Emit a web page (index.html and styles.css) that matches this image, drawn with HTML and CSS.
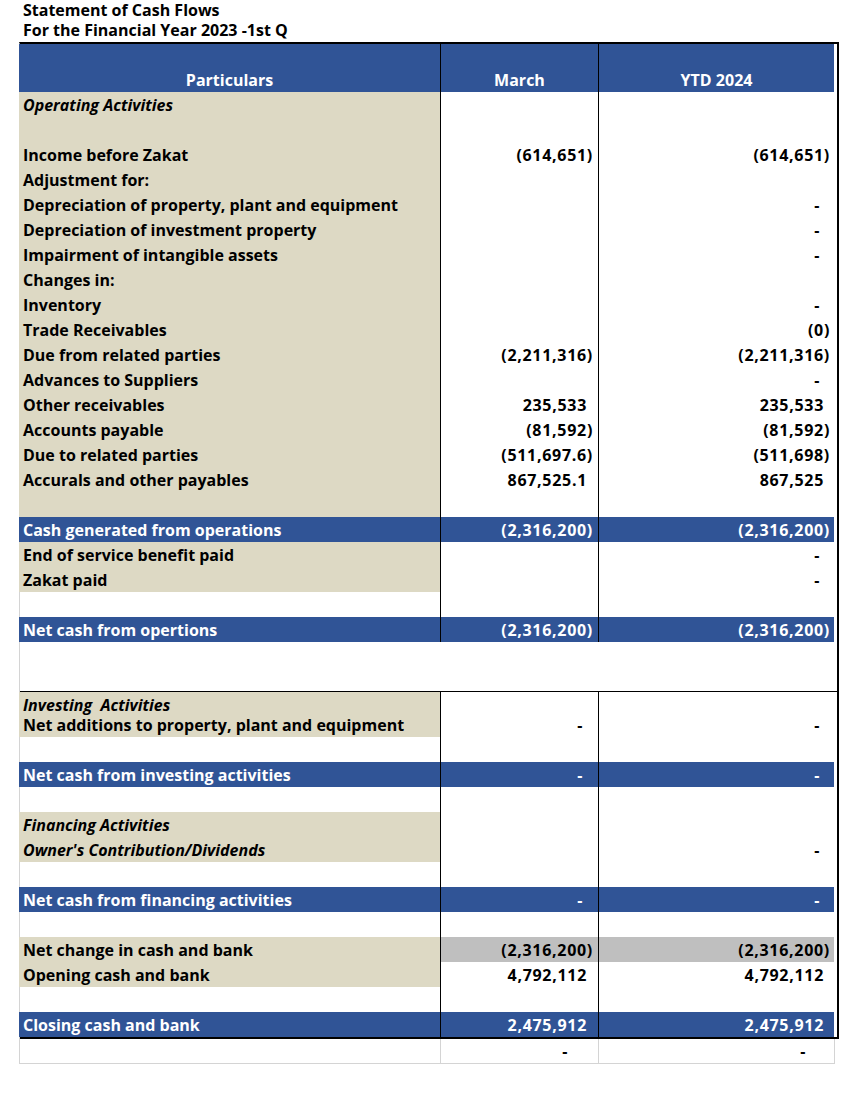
FILE: index.html
```html
<!DOCTYPE html>
<html>
<head>
<meta charset="utf-8">
<link rel="stylesheet" href="styles.css">
</head>
<body>
<div class="title">
  <div>Statement of Cash Flows</div>
  <div>For the Financial Year 2023 -1st Q</div>
</div>
<div class="sheet">
  <div class="r head blue">
    <div class="c1">Particulars</div>
    <div class="c2">March</div>
    <div class="c3">YTD 2024</div>
  </div>
  <div class="r"><div class="c1 tan it">Operating Activities</div><div class="c2"></div><div class="c3"></div></div>
  <div class="r"><div class="c1 tan"></div><div class="c2"></div><div class="c3"></div></div>
  <div class="r"><div class="c1 tan">Income before Zakat</div><div class="c2">(614,651)</div><div class="c3">(614,651)</div></div>
  <div class="r"><div class="c1 tan">Adjustment for:</div><div class="c2"></div><div class="c3"></div></div>
  <div class="r"><div class="c1 tan">Depreciation of property, plant and equipment</div><div class="c2"></div><div class="c3 dash">-</div></div>
  <div class="r"><div class="c1 tan">Depreciation of investment property</div><div class="c2"></div><div class="c3 dash">-</div></div>
  <div class="r"><div class="c1 tan">Impairment of intangible assets</div><div class="c2"></div><div class="c3 dash">-</div></div>
  <div class="r"><div class="c1 tan">Changes in:</div><div class="c2"></div><div class="c3"></div></div>
  <div class="r"><div class="c1 tan">Inventory</div><div class="c2"></div><div class="c3 dash">-</div></div>
  <div class="r"><div class="c1 tan">Trade Receivables</div><div class="c2"></div><div class="c3">(0)</div></div>
  <div class="r"><div class="c1 tan">Due from related parties</div><div class="c2">(2,211,316)</div><div class="c3">(2,211,316)</div></div>
  <div class="r"><div class="c1 tan">Advances to Suppliers</div><div class="c2"></div><div class="c3 dash">-</div></div>
  <div class="r"><div class="c1 tan">Other receivables</div><div class="c2 pos">235,533</div><div class="c3 pos">235,533</div></div>
  <div class="r"><div class="c1 tan">Accounts payable</div><div class="c2">(81,592)</div><div class="c3">(81,592)</div></div>
  <div class="r"><div class="c1 tan">Due to related parties</div><div class="c2">(511,697.6)</div><div class="c3">(511,698)</div></div>
  <div class="r"><div class="c1 tan">Accurals and other payables</div><div class="c2 pos">867,525.1</div><div class="c3 pos">867,525</div></div>
  <div class="r"><div class="c1 tan"></div><div class="c2"></div><div class="c3"></div></div>
  <div class="r blue"><div class="c1">Cash generated from operations</div><div class="c2">(2,316,200)</div><div class="c3">(2,316,200)</div></div>
  <div class="r"><div class="c1 tan">End of service benefit paid</div><div class="c2"></div><div class="c3 dash">-</div></div>
  <div class="r"><div class="c1 tan">Zakat paid</div><div class="c2"></div><div class="c3 dash">-</div></div>
  <div class="r"><div class="c1"></div><div class="c2"></div><div class="c3"></div></div>
  <div class="r blue"><div class="c1">Net cash from opertions</div><div class="c2">(2,316,200)</div><div class="c3">(2,316,200)</div></div>
  <div class="r nolines"><div class="c1"></div><div class="c2"></div><div class="c3"></div></div>
  <div class="r nolines"><div class="c1"></div><div class="c2"></div><div class="c3"></div></div>
  <div class="r tall">
    <div class="c1 tan"><span class="it">Investing&nbsp; Activities</span><br>Net additions to property, plant and equipment</div>
    <div class="c2 dash">-</div>
    <div class="c3 dash">-</div>
  </div>
  <div class="r"><div class="c1"></div><div class="c2"></div><div class="c3"></div></div>
  <div class="r blue"><div class="c1">Net cash from investing activities</div><div class="c2 dash">-</div><div class="c3 dash">-</div></div>
  <div class="r"><div class="c1"></div><div class="c2"></div><div class="c3"></div></div>
  <div class="r"><div class="c1 tan it">Financing Activities</div><div class="c2"></div><div class="c3"></div></div>
  <div class="r"><div class="c1 tan it">Owner's Contribution/Dividends</div><div class="c2"></div><div class="c3 dash">-</div></div>
  <div class="r"><div class="c1"></div><div class="c2"></div><div class="c3"></div></div>
  <div class="r blue"><div class="c1">Net cash from financing activities</div><div class="c2 dash">-</div><div class="c3 dash">-</div></div>
  <div class="r"><div class="c1"></div><div class="c2"></div><div class="c3"></div></div>
  <div class="r"><div class="c1 tan">Net change in cash and bank</div><div class="c2 grey">(2,316,200)</div><div class="c3 grey">(2,316,200)</div></div>
  <div class="r"><div class="c1 tan">Opening cash and bank</div><div class="c2 pos">4,792,112</div><div class="c3 pos">4,792,112</div></div>
  <div class="r"><div class="c1"></div><div class="c2"></div><div class="c3"></div></div>
  <div class="r blue closing"><div class="c1">Closing cash and bank</div><div class="c2 pos">2,475,912</div><div class="c3 pos">2,475,912</div></div>
</div>
<div class="tail">
  <div class="c1"></div>
  <div class="c2 d1">-</div>
  <div class="c3 d2">-</div>
</div>
</body>
</html>
```

FILE: styles.css
```css
html, body {
  margin: 0;
  padding: 0;
  background: #ffffff;
}
body {
  font-family: "Open Sans", Lato, "Liberation Sans", sans-serif;
  font-weight: 700;
  font-size: 16px;
  color: #000000;
}
.title {
  padding-left: 23px;
  line-height: 20px;
  height: 42px;
  box-sizing: border-box;
  padding-top: 0;
}
.sheet {
  margin-left: 19px;
  width: 817px;
  border-top: 2px solid #000000;
  border-right: 2px solid #000000;
  border-left: 1px solid #d4d4d4;
}
.r {
  display: grid;
  grid-template-columns: 420px 158px 236px;
  height: 25px;
}
.r > div {
  line-height: 23px;
  padding-top: 2px;
  white-space: nowrap;
  overflow: visible;
}
.c1 {
  padding-left: 3px;
}
.c2, .c3 {
  border-left: 1px solid #000000;
  text-align: right;
  letter-spacing: 0.7px;
}
.r.head > .c2, .r.head > .c3 {
  letter-spacing: 0;
}
.c2 { padding-right: 5px; }
.c3 { padding-right: 4px; }
.c2.pos { padding-right: 11px; }
.c3.pos { padding-right: 10px; }
.c2.dash { padding-right: 15px; }
.c3.dash { padding-right: 14px; }
.tan {
  background: #ddd9c4;
  margin-left: -1px;
  padding-left: 4px;
}
.it {
  font-style: italic;
}
.blue > div {
  background: #305496;
  color: #ffffff;
}
.blue > .c1 {
  margin-left: -1px;
  padding-left: 4px;
}
.grey {
  background: #bfbfbf;
}
.nolines > .c2, .nolines > .c3 {
  border-left-color: transparent;
}
.r.head {
  height: 48px;
}
.r.head > div {
  display: flex;
  align-items: flex-end;
  justify-content: center;
  padding: 0;
  line-height: 23px;
}
.r.head > .c1 {
  padding-left: 0;
}
.sheet > .r:nth-child(25) {
  border-bottom: 1px solid #000000;
  height: 25px;
  box-sizing: border-box;
}
.r.tall {
  height: 45px;
}
.r.tall > div {
  line-height: 20px;
  padding-top: 3px;
  padding-bottom: 1px;
  box-sizing: border-box;
}
.r.tall > .c2, .r.tall > .c3 {
  padding-top: 23px;
}
.closing {
  height: 27px;
  border-bottom: 2px solid #000000;
  box-sizing: border-box;
}
.tail {
  margin-left: 19px;
  width: 816px;
  display: grid;
  grid-template-columns: 420px 158px 236px;
  height: 25px;
  border-left: 1px solid #d4d4d4;
  border-right: 1px solid #d4d4d4;
  border-bottom: 1px solid #d4d4d4;
  box-sizing: border-box;
}
.tail > div {
  line-height: 24px;
  text-align: right;
}
.tail > .c2, .tail > .c3 {
  border-left: 1px solid #d4d4d4;
}
.tail > .d1 { padding-right: 30px; }
.tail > .d2 { padding-right: 28px; }
```
